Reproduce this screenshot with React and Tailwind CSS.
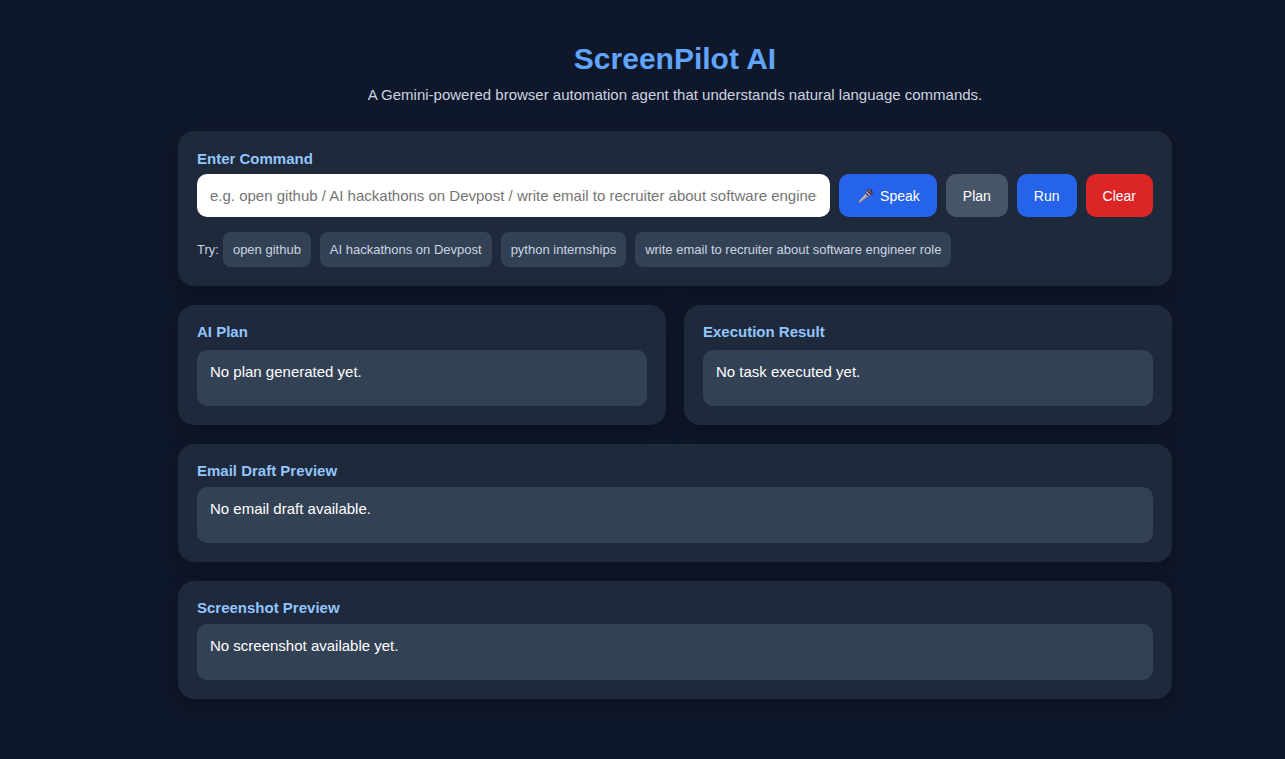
import { useState } from 'react';

const EXAMPLES = [
  'open github',
  'AI hackathons on Devpost',
  'python internships',
  'write email to recruiter about software engineer role',
];

function MicIcon() {
  return (
    <svg width="19" height="16" viewBox="-2 0 19 16" aria-hidden="true">
      <path d="M8.800 4.800 1 13c-.5.600-.5 1.100-.1 1.500s1 .4 1.500 0L11.800 7.600z" fill="#8e8790" />
      <path d="M8.800 4.800 1 13l.9.900 8.600-7.600z" fill="#bdb4b8" />
      <circle cx="11.300" cy="4.500" r="3.400" fill="#44304d" />
      <path d="M9.300 2.500c1-.9 2.500-1.200 3.700-.6L11.200 3.800z" fill="#7a6c88" />
      <path d="m8.300 3.600 4 4" stroke="#d6c6c6" strokeWidth="1.100" />
      <path d="m10.800 2.500 3 3" stroke="#9d8ca3" strokeWidth=".7" />
    </svg>
  );
}

function Card({ children }) {
  return (
    <section className="rounded-2xl bg-[#1e293b] p-[19px] shadow-[0_8px_20px_rgba(0,0,0,0.25)]">
      {children}
    </section>
  );
}

function OutputCard({ title, text, headingClass = 'mb-[9px]' }) {
  return (
    <Card>
      <h2 className={`font-bold leading-[15px] text-[#93c5fd] ${headingClass}`}>{title}</h2>
      <div className="min-h-14 rounded-[10px] bg-[#334155] p-[13px] leading-[18px]">
        {text}
      </div>
    </Card>
  );
}

function Chip({ text, onPick }) {
  return (
    <button
      type="button"
      onClick={() => onPick(text)}
      className="h-[35px] rounded-lg bg-[#334155] px-[10px] text-[13px] text-[#cbd5e1]"
    >
      {text}
    </button>
  );
}

const buttonClass = 'flex h-[43px] shrink-0 items-center rounded-[10px] px-[17px] text-sm';

export default function App() {
  const [command, setCommand] = useState('');

  return (
    <div className="min-h-screen bg-[#0f172a] pr-4 pb-[60px] pl-[81px] pt-10 font-['Liberation_Sans',Arial,sans-serif] text-[15px] text-white">
      <main className="mx-auto flex max-w-[994px] flex-col gap-[19px]">
        <header className="mb-2 text-center">
          <h1 className="text-[30px] font-bold leading-[38px] text-[#60a5fa]">ScreenPilot AI</h1>
          <p className="mt-2 leading-[18px] text-[#cbd5e1]">
            A Gemini-powered browser automation agent that understands natural language commands.
          </p>
        </header>

        <Card>
          <label htmlFor="command" className="mb-[7px] block font-bold leading-[17px] text-[#93c5fd]">
            Enter Command
          </label>
          <form className="flex gap-[9px]" onSubmit={(e) => e.preventDefault()}>
            <input
              id="command"
              type="text"
              value={command}
              onChange={(e) => setCommand(e.target.value)}
              placeholder="e.g. open github / AI hackathons on Devpost / write email to recruiter about software engineer role"
              className="h-[43px] min-w-0 flex-1 rounded-[10px] bg-white px-[13px] text-[#0f172a] placeholder:text-[#757575]"
            />
            <button type="button" className={`${buttonClass} gap-[5px] bg-[#2563eb]`}>
              <MicIcon />
              Speak
            </button>
            <button type="button" className={`${buttonClass} bg-[#475569]`}>
              Plan
            </button>
            <button type="submit" className={`${buttonClass} bg-[#2563eb]`}>
              Run
            </button>
            <button
              type="button"
              onClick={() => setCommand('')}
              className={`${buttonClass} bg-[#dc2626]`}
            >
              Clear
            </button>
          </form>

          <div className="mt-[15px] flex flex-wrap items-center gap-[9px]">
            <div className="flex items-center gap-1">
              <span className="text-[13px] text-[#cbd5e1]">Try:</span>
              <Chip text={EXAMPLES[0]} onPick={setCommand} />
            </div>
            {EXAMPLES.slice(1).map((text) => (
              <Chip key={text} text={text} onPick={setCommand} />
            ))}
          </div>
        </Card>

        <div className="grid grid-cols-2 gap-[18px]">
          <OutputCard title="AI Plan" text="No plan generated yet." headingClass="mb-[11px]" />
          <OutputCard title="Execution Result" text="No task executed yet." headingClass="mb-[11px]" />
        </div>

        <OutputCard title="Email Draft Preview" text="No email draft available." />
        <OutputCard title="Screenshot Preview" text="No screenshot available yet." />
      </main>
    </div>
  );
}
